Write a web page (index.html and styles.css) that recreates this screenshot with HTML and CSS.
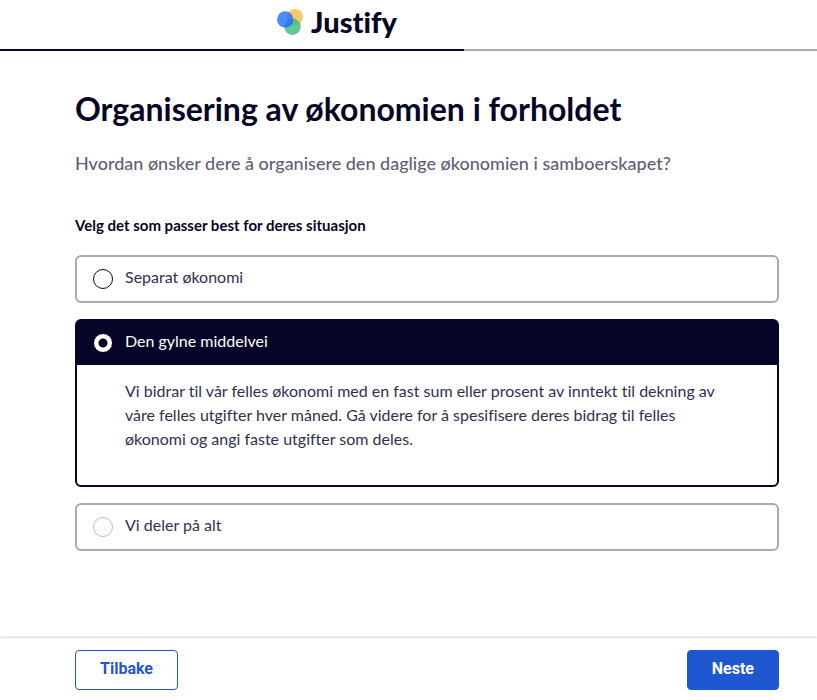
FILE: index.html
```html
<!DOCTYPE html>
<html lang="no">

<head>
    <meta charset="UTF-8">
    <meta name="viewport" content="width=device-width, initial-scale=1.0">
    <title>Justify</title>
    <link rel="stylesheet" href="styles.css">
</head>

<body>
    <header class="header">
        <a href="#" class="logo">
            <svg class="logo-icon" width="26" height="26" viewBox="0 0 26 26" aria-hidden="true">
                <circle cx="18" cy="8" r="8" fill="#f5c869" />
                <circle cx="15.500" cy="17.700" r="8.200" fill="#3dbb83" fill-opacity="0.82" />
                <circle cx="8.200" cy="10.500" r="8.200" fill="#1f66ff" fill-opacity="0.78" />
            </svg>
            <span class="logo-name">Justify</span>
        </a>
    </header>
    <div class="progress" role="progressbar" aria-label="Fremdrift" aria-valuenow="57" aria-valuemin="0" aria-valuemax="100">
        <div class="progress-bar" style="width: 56.8%"></div>
    </div>

    <main class="content">
        <h1>Organisering av økonomien i forholdet</h1>
        <p class="lead">Hvordan ønsker dere å organisere den daglige økonomien i samboerskapet?</p>

        <fieldset class="options">
            <legend>Velg det som passer best for deres situasjon</legend>

            <div class="option">
                <label class="option-label">
                    <input type="radio" name="economy" value="separate" class="focused">
                    Separat økonomi
                </label>
            </div>

            <div class="option selected">
                <label class="option-label">
                    <input type="radio" name="economy" value="middle" checked>
                    Den gylne middelvei
                </label>
                <p class="option-text">Vi bidrar til vår felles økonomi med en fast sum eller prosent av inntekt til dekning av våre felles utgifter hver måned. Gå videre for å spesifisere deres bidrag til felles økonomi og angi faste utgifter som deles.</p>
            </div>

            <div class="option">
                <label class="option-label">
                    <input type="radio" name="economy" value="shared">
                    Vi deler på alt
                </label>
            </div>
        </fieldset>
    </main>

    <footer class="footer">
        <button type="button" class="btn btn-outline">Tilbake</button>
        <button type="button" class="btn btn-primary">Neste</button>
    </footer>
</body>

</html>
```

FILE: styles.css
```css
* {
    margin: 0;
    padding: 0;
    box-sizing: border-box;
}

body {
    min-height: 100vh;
    display: flex;
    flex-direction: column;
    background: #fff;
    color: #050528;
    font-family: Lato, sans-serif;
    font-size: 16px;
    font-variant-ligatures: none;
    line-height: 24px;
}

.header {
    display: flex;
    justify-content: center;
    height: 49px;
    padding: 5px 143px 0 0;
}

.logo {
    display: flex;
    gap: 8px;
    color: #050528;
    text-decoration: none;
}

.logo-icon {
    margin-top: 4px;
}

.logo-name {
    font-size: 29px;
    font-weight: 900;
    line-height: 34px;
}

.progress {
    height: 2px;
    background: #aaa;
}

.progress-bar {
    height: 100%;
    background: #050528;
}

.content {
    flex: 1;
    padding: 38px 38px 40px 75px;
}

h1 {
    font-size: 32px;
    font-weight: 700;
    line-height: 40px;
}

.lead {
    margin-top: 22px;
    color: #5f5f75;
    font-size: 18px;
    font-weight: 500;
}

.options {
    border: none;
    margin-top: 38px;
}

legend {
    margin-bottom: 18px;
    font-size: 15px;
    font-weight: 700;
}

.option {
    border: 2px solid #aaa;
    border-radius: 6px;
    margin-bottom: 16px;
    color: #30304e;
}

.option-label {
    display: flex;
    align-items: center;
    gap: 12px;
    min-height: 44px;
    padding: 0 16px 4px;
    cursor: pointer;
}

.option input {
    appearance: none;
    width: 20px;
    height: 20px;
    margin-top: 4px;
    border: 1px solid #bbb;
    border-radius: 50%;
    background: #fff;
    cursor: pointer;
}

.option input.focused {
    border-color: #050528;
}

.option input:checked {
    border-color: #050528;
    background: radial-gradient(circle, #050528 4px, #fff 5px);
}

.option.selected {
    border-color: #050528;
}

.selected .option-label {
    background: #050528;
    color: #fff;
}

.option-text {
    padding: 14px 52px 34px 48px;
}

.footer {
    display: flex;
    justify-content: space-between;
    padding: 12px 38px 10px 75px;
    box-shadow: 0 0 3px rgba(0, 0, 0, 0.3);
}

.btn {
    height: 40px;
    padding: 0 24px 4px;
    border: 1px solid #1f57d0;
    border-radius: 4px;
    font-family: Roboto, sans-serif;
    font-size: 16px;
    font-weight: 700;
    cursor: pointer;
}

.btn-outline {
    background: #fff;
    color: #1f57d0;
}

.btn-primary {
    background: #1f57d0;
    color: #fff;
}
```
